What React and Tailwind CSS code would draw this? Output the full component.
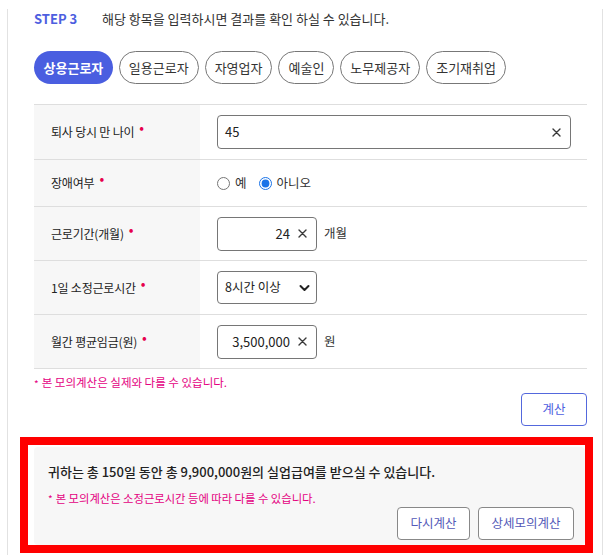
import React from "react";

const font = "font-['Noto_Sans_CJK_KR','Noto_Sans',sans-serif]";

function Dot() {
  return <span className="relative -top-[5px] ml-[5px] text-[#e6004d] text-[14px] leading-none">•</span>;
}

function XIcon() {
  return (
    <svg width="9" height="9" viewBox="0 0 9 9" className="shrink-0">
      <path d="M1 1L8 8M8 1L1 8" stroke="#3a3a3a" strokeWidth="1.4" strokeLinecap="round" />
    </svg>
  );
}

function Row({ label, h, children }) {
  return (
    <div className={`flex border-b border-[#dedede] ${h}`}>
      <div className="w-[166px] shrink-0 bg-[#f7f7f7] pl-[17px] flex items-center text-[12px] text-[#222] tracking-[-0.2px]">
        <span>{label}</span>
        <Dot />
      </div>
      <div className="flex-1 pl-[17px] flex items-center">{children}</div>
    </div>
  );
}

function SmallInput({ value, unit }) {
  return (
    <div className="flex items-center gap-[7px]">
      <div className="w-[100px] h-[34px] border border-[#767676] rounded-[4px] flex items-center justify-end pr-[9px] gap-[8px] text-[13px] text-[#222]">
        <span>{value}</span>
        <XIcon />
      </div>
      <span className="text-[12.5px] text-[#333]">{unit}</span>
    </div>
  );
}

export default function App() {
  const tabs = ["상용근로자", "일용근로자", "자영업자", "예술인", "노무제공자", "조기재취업"];
  return (
    <div className={`w-[613px] h-[555px] bg-white overflow-hidden ${font}`}>
      <div className="ml-[7px] w-[596px] h-full border-x border-[#e2e2e2] pl-[26px] pr-[15px]">
        <div className="flex items-center h-[20px] mt-[9px]">
          <span className="w-[68px] text-[13px] font-bold text-[#4d5ee0]">STEP 3</span>
          <span className="text-[13px] text-[#333]">해당 항목을 입력하시면 결과를 확인 하실 수 있습니다.</span>
        </div>
        <div className="flex gap-[6px] mt-[22px]">
          {tabs.map((t, i) =>
            i === 0 ? (
              <div key={t} className="h-[33px] px-[9.5px] rounded-full bg-[#4a5ee0] text-white font-bold text-[13px] flex items-center">{t}</div>
            ) : (
              <div key={t} className="h-[33px] px-[9px] rounded-full border border-[#777] bg-white text-[#333] text-[13px] flex items-center">{t}</div>
            )
          )}
        </div>
        <div className="mt-[20px] border-t border-[#dedede]">
          <Row label="퇴사 당시 만 나이" h="h-[55px]">
            <div className="w-[354px] h-[34px] border border-[#767676] rounded-[4px] flex items-center justify-between pl-[7px] pr-[9px] text-[13px] text-[#222]">
              <span>45</span>
              <XIcon />
            </div>
          </Row>
          <Row label="장애여부" h="h-[47px]">
            <label className="flex items-center gap-[5px] text-[12.5px] text-[#333]">
              <input type="radio" name="d" className="m-0 w-[13px] h-[13px] accent-[#1a73e8]" />
              <span>예</span>
            </label>
            <label className="flex items-center gap-[5px] ml-[12px] text-[12.5px] text-[#333]">
              <input type="radio" name="d" defaultChecked className="m-0 w-[13px] h-[13px] accent-[#1a73e8]" />
              <span>아니오</span>
            </label>
          </Row>
          <Row label="근로기간(개월)" h="h-[54px]">
            <SmallInput value="24" unit="개월" />
          </Row>
          <Row label="1일 소정근로시간" h="h-[54px]">
            <div className="w-[100px] h-[33px] border border-[#767676] rounded-[4px] flex items-center justify-between pl-[7px] pr-[6px] text-[12.5px] text-[#222]">
              <span>8시간 이상</span>
              <svg width="11" height="8" viewBox="0 0 11 8">
                <path d="M1.5 2L5.5 6L9.5 2" stroke="#222" strokeWidth="2" fill="none" strokeLinecap="round" strokeLinejoin="round" />
              </svg>
            </div>
          </Row>
          <Row label="월간 평균임금(원)" h="h-[54px]">
            <SmallInput value="3,500,000" unit="원" />
          </Row>
        </div>
        <div className="mt-[7px] h-[14px] flex items-center text-[11.5px] text-[#e4007f]">
          <span className="mr-[3px] text-[10px]">*</span>본 모의계산은 실제와 다를 수 있습니다.
        </div>
        <div className="flex justify-end mt-[3px]">
          <div className="w-[66px] h-[33px] border border-[#5468dd] rounded-[4px] flex items-center justify-center text-[12.5px] text-[#4d5ee0]">계산</div>
        </div>
        <div className="-ml-[14px] w-[573px] mt-[11px] border-8 border-[#ff0000] pl-[6px] pt-[2px] h-[116px]">
          <div className="h-[98px] bg-[#f7f7f7] rounded-[4px] pl-[14px] pr-[11px] pt-[16px]">
            <div className="h-[18px] flex items-center text-[13px] font-medium text-[#222]">
              귀하는 총 150일 동안 총 9,900,000원의 실업급여를 받으실 수 있습니다.
            </div>
            <div className="mt-[9px] h-[16px] flex items-center text-[11.3px] text-[#e4007f]">
              <span className="mr-[3px] text-[10px]">*</span>본 모의계산은 소정근로시간 등에 따라 다를 수 있습니다.
            </div>
            <div className="flex justify-end gap-[8px] mt-[1px]">
              <div className="w-[73px] h-[33px] border border-[#888] rounded-[4px] bg-white flex items-center justify-center text-[12.5px] text-[#5258b8]">다시계산</div>
              <div className="w-[96px] h-[33px] border border-[#888] rounded-[4px] bg-white flex items-center justify-center text-[12.5px] text-[#5258b8]">상세모의계산</div>
            </div>
          </div>
        </div>
      </div>
    </div>
  );
}
